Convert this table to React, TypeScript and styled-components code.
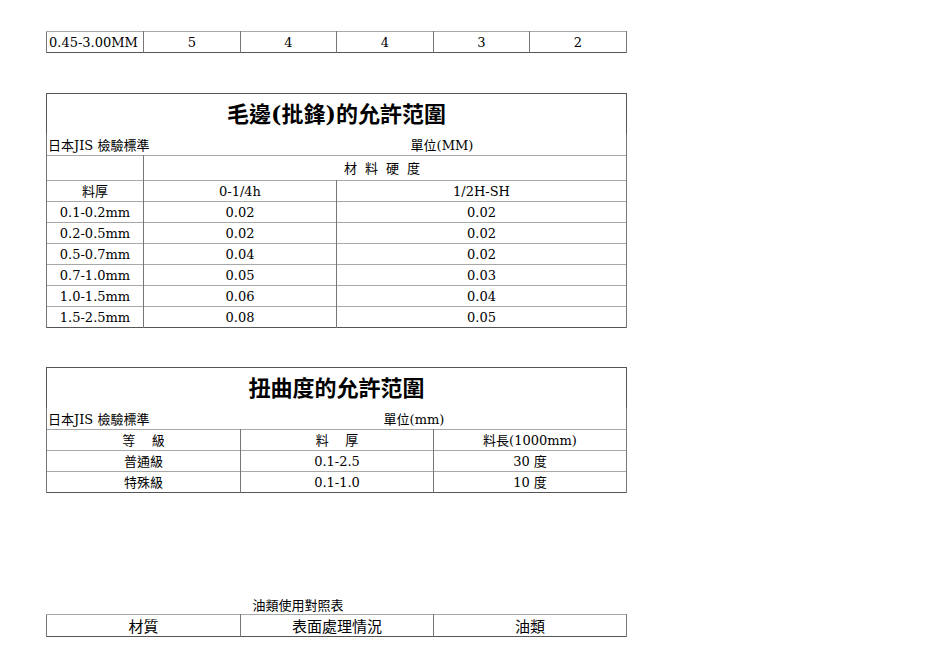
import styled, { createGlobalStyle } from "styled-components";

const GlobalStyle = createGlobalStyle`
  html, body {
    margin: 0;
    padding: 0;
    background: #ffffff;
  }
  body {
    font-family: "DejaVu Serif", "Noto Sans CJK TC", serif;
    color: #000;
  }
`;

const OUTER = "#555";
const INNER_H = "#a8a8a8";
const INNER_V = "#777";

const Sheet = styled.div`
  width: 950px;
  height: 672px;
  padding: 31px 0 0 46px;
  box-sizing: border-box;
  display: flex;
  flex-direction: column;
`;

const Table = styled.table<{ $gap?: number }>`
  width: 580px;
  border-collapse: collapse;
  table-layout: fixed;
  border: 1px solid ${OUTER};
  margin-top: ${(p) => p.$gap ?? 0}px;
  font-size: 13px;
`;

const Cell = styled.td<{ $h?: number; $align?: string; $top?: boolean }>`
  height: ${(p) => p.$h ?? 20}px;
  padding: 0 2px;
  text-align: ${(p) => p.$align ?? "center"};
  border-left: 1px solid ${INNER_V};
  border-right: 1px solid ${INNER_V};
  border-top: 1px solid ${(p) => (p.$top === false ? "transparent" : INNER_H)};
  white-space: nowrap;
  overflow: hidden;
  line-height: 1;
  vertical-align: middle;
`;

const TitleCell = styled.td`
  height: 40px;
  padding: 0;
  text-align: center;
  vertical-align: middle;
  font-size: 22px;
  font-weight: bold;
  font-family: "DejaVu Serif", "Noto Sans CJK TC", serif;
  line-height: 1;
`;

const SubRow = styled.div<{ $cols: string }>`
  display: grid;
  grid-template-columns: ${(p) => p.$cols};
  align-items: center;
  height: 20px;
  font-size: 13px;
`;

const SubLeft = styled.span`
  padding-left: 1px;
  text-align: left;
`;

const SubUnit = styled.span`
  text-align: center;
`;

const Spaced = styled.span`
  letter-spacing: 8px;
  padding-left: 198px;
`;

const Caption = styled.div`
  width: 504px;
  text-align: center;
  font-family: "Noto Sans CJK TC", "Noto Sans", sans-serif;
  font-size: 13px;
  font-weight: 400;
  margin-top: 103px;
  line-height: 18px;
`;

const SansTable = styled(Table)`
  font-family: "Noto Sans CJK TC", "Noto Sans", sans-serif;
  font-size: 15px;
`;

const burr = [
  ["0.1-0.2mm", "0.02", "0.02"],
  ["0.2-0.5mm", "0.02", "0.02"],
  ["0.5-0.7mm", "0.04", "0.02"],
  ["0.7-1.0mm", "0.05", "0.03"],
  ["1.0-1.5mm", "0.06", "0.04"],
  ["1.5-2.5mm", "0.08", "0.05"],
];

const twist = [
  ["普通級", "0.1-2.5", "30 度"],
  ["特殊級", "0.1-1.0", "10 度"],
];

export default function App() {
  return (
    <>
      <GlobalStyle />
      <Sheet>
        <Table>
          <colgroup>
            <col style={{ width: 97 }} />
            <col style={{ width: 97 }} />
            <col style={{ width: 96 }} />
            <col style={{ width: 97 }} />
            <col style={{ width: 96 }} />
            <col style={{ width: 97 }} />
          </colgroup>
          <tbody>
            <tr>
              <Cell $align="left">0.45-3.00MM</Cell>
              <Cell>5</Cell>
              <Cell>4</Cell>
              <Cell>4</Cell>
              <Cell>3</Cell>
              <Cell>2</Cell>
            </tr>
          </tbody>
        </Table>

        <Table $gap={40}>
          <colgroup>
            <col style={{ width: 97 }} />
            <col style={{ width: 193 }} />
            <col style={{ width: 290 }} />
          </colgroup>
          <tbody>
            <tr>
              <TitleCell colSpan={3}>毛邊(批鋒)的允許范圍</TitleCell>
            </tr>
            <tr>
              <Cell colSpan={3} $top={false} $align="left" style={{ padding: 0 }}>
                <SubRow $cols="290px 210px 1fr">
                  <SubLeft>日本JIS 檢驗標準</SubLeft>
                  <SubUnit>單位(MM)</SubUnit>
                </SubRow>
              </Cell>
            </tr>
            <tr>
              <Cell $h={24}></Cell>
              <Cell colSpan={2} $h={24} $align="left">
                <Spaced>材料硬度</Spaced>
              </Cell>
            </tr>
            <tr>
              <Cell>料厚</Cell>
              <Cell>0-1/4h</Cell>
              <Cell>1/2H-SH</Cell>
            </tr>
            {burr.map((r) => (
              <tr key={r[0]}>
                <Cell>{r[0]}</Cell>
                <Cell>{r[1]}</Cell>
                <Cell>{r[2]}</Cell>
              </tr>
            ))}
          </tbody>
        </Table>

        <Table $gap={39}>
          <colgroup>
            <col style={{ width: 194 }} />
            <col style={{ width: 193 }} />
            <col style={{ width: 193 }} />
          </colgroup>
          <tbody>
            <tr>
              <TitleCell colSpan={3}>扭曲度的允許范圍</TitleCell>
            </tr>
            <tr>
              <Cell colSpan={3} $top={false} $align="left" style={{ padding: 0 }}>
                <SubRow $cols="290px 154px 1fr">
                  <SubLeft>日本JIS 檢驗標準</SubLeft>
                  <SubUnit>單位(mm)</SubUnit>
                </SubRow>
              </Cell>
            </tr>
            <tr>
              <Cell>等&nbsp;&nbsp;&nbsp;&nbsp;級</Cell>
              <Cell>料&nbsp;&nbsp;&nbsp;&nbsp;厚</Cell>
              <Cell>料長(1000mm)</Cell>
            </tr>
            {twist.map((r) => (
              <tr key={r[0]}>
                <Cell>{r[0]}</Cell>
                <Cell>{r[1]}</Cell>
                <Cell>{r[2]}</Cell>
              </tr>
            ))}
          </tbody>
        </Table>

        <Caption>油類使用對照表</Caption>
        <SansTable>
          <colgroup>
            <col style={{ width: 194 }} />
            <col style={{ width: 193 }} />
            <col style={{ width: 193 }} />
          </colgroup>
          <tbody>
            <tr>
              <Cell $h={21}>材質</Cell>
              <Cell $h={21}>表面處理情況</Cell>
              <Cell $h={21}>油類</Cell>
            </tr>
          </tbody>
        </SansTable>
      </Sheet>
    </>
  );
}
